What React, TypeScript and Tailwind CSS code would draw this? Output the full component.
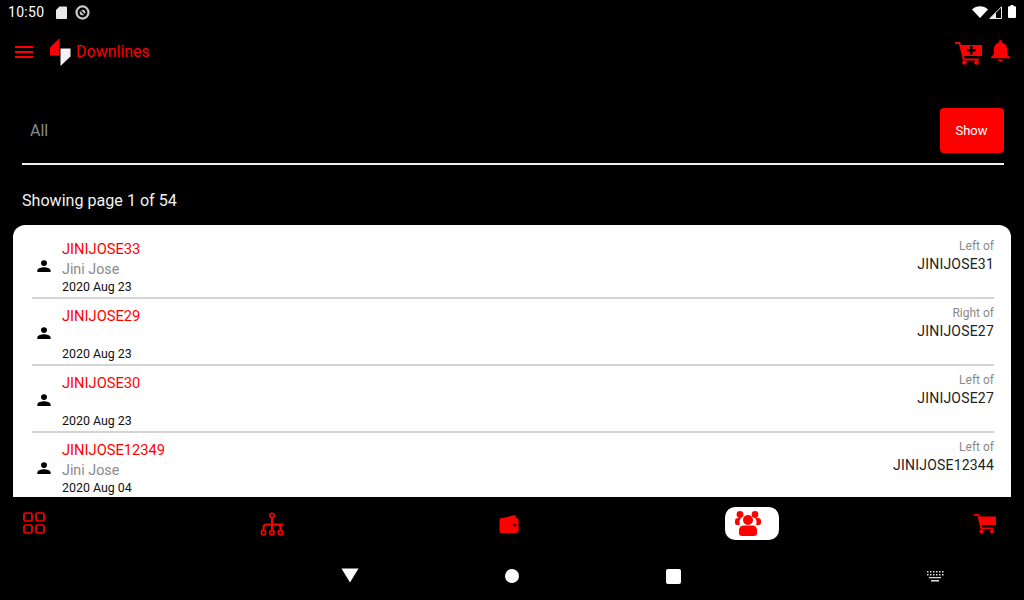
import React from "react";

function Person() {
  return (
    <svg width="16" height="16" viewBox="0 0 24 24" fill="#000" className="shrink-0">
      <path d="M12 12c2.76 0 4.5-1.9 4.500-4.500S14.760 3.500 12 3.500 7.500 4.900 7.500 7.500 9.240 12 12 12zm0 2c-3.500 0-10 1.600-10 5v2h20v-2c0-3.400-6.500-5-10-5z" />
    </svg>
  );
}

type RowT = { id: string; name: string; date: string; side: string; parent: string };
const rows: RowT[] = [
  { id: "JINIJOSE33", name: "Jini Jose", date: "2020 Aug 23", side: "Left of", parent: "JINIJOSE31" },
  { id: "JINIJOSE29", name: "", date: "2020 Aug 23", side: "Right of", parent: "JINIJOSE27" },
  { id: "JINIJOSE30", name: "", date: "2020 Aug 23", side: "Left of", parent: "JINIJOSE27" },
  { id: "JINIJOSE12349", name: "Jini Jose", date: "2020 Aug 04", side: "Left of", parent: "JINIJOSE12344" },
];

function Row({ r, last }: { r: RowT; last: boolean }) {
  return (
    <div className={`h-[67px] shrink-0 flex items-center ${last ? "" : "border-b-2 border-[#d4d4d4]"}`}>
      <div className="w-[30px] flex items-center pl-[4px] pt-[2px]">
        <Person />
      </div>
      <div className="flex-1 flex flex-col self-start pt-[8px]">
        <div className="h-[19px] leading-[19px] text-[14.7px] text-[#ff0000]">{r.id}</div>
        <div className="h-[20px] leading-[20px] text-[14.3px] text-[#8a8a8a]">{r.name}</div>
        <div className="h-[16px] leading-[16px] text-[12.4px] text-[#111]">{r.date}</div>
      </div>
      <div className="flex flex-col items-end self-start pt-[5px]">
        <div className="h-[18px] leading-[18px] text-[12px] text-[#8a8a8a]">{r.side}</div>
        <div className="h-[18px] leading-[18px] text-[14px] tracking-[0.2px] text-[#222]">{r.parent}</div>
      </div>
    </div>
  );
}

export default function App() {
  return (
    <div
      className="w-[1024px] h-[600px] bg-black overflow-hidden flex flex-col"
      style={{ fontFamily: "Roboto, sans-serif" }}
    >
      {/* status bar */}
      <div className="h-[24px] shrink-0 flex items-center px-[8px] text-white">
        <span className="text-[14px] w-[48px] tracking-[0.3px]">10:50</span>
        <svg width="11" height="13" viewBox="0 0 11 13" fill="#e8e8e8">
          <path d="M3.500 0.500H10a1 1 0 0 1 1 1V12a1 1 0 0 1-1 1H1a1 1 0 0 1-1-1V4z" />
        </svg>
        <svg width="15" height="15" viewBox="0 0 16 16" className="ml-[8px]">
          <circle cx="8" cy="8" r="6.400" fill="none" stroke="#c8c8c8" strokeWidth="2.400" />
          <circle cx="8" cy="8" r="3" fill="#c8c8c8" />
          <path d="M4.500 4.500l7 7" stroke="#000" strokeWidth="1.300" />
        </svg>
        <div className="flex-1" />
        <svg width="16" height="12" viewBox="0 0 16 12" fill="#fff">
          <path d="M0 3.500C4.500-.8 11.500-.8 16 3.500L8 12z" />
        </svg>
        <svg width="13" height="13" viewBox="0 0 13 13" className="ml-[1px]">
          <path d="M12.500 0.800V12.500H.8z" fill="none" stroke="#eee" strokeWidth="1" />
          <path d="M7 6.500V12.500H1z" fill="#eee" />
        </svg>
        <svg width="8" height="13" viewBox="0 0 8 13" fill="#fff" className="ml-[6px] mt-[-2px]">
          <path d="M2.500 0h3v1.200H7a1 1 0 0 1 1 1V12a1 1 0 0 1-1 1H1a1 1 0 0 1-1-1V2.200a1 1 0 0 1 1-1h1.500z" />
        </svg>
      </div>

      {/* toolbar */}
      <div className="h-[56px] shrink-0 flex items-center pl-[15px] pr-[14px]">
        <div className="w-[18px] flex flex-col gap-[3px] mt-[-1px]">
          <div className="h-[2px] bg-[#ff0000]" />
          <div className="h-[2px] bg-[#ff0000]" />
          <div className="h-[2px] bg-[#ff0000]" />
        </div>
        <svg width="21" height="28" viewBox="0 0 21 28" className="ml-[17px] mt-[-1px]">
          <path d="M0 9.500L9.500 0V17.500H0z" fill="#ff0000" />
          <path d="M10.500 10.500H20.500V18.500L10.500 28z" fill="#f4f4f4" />
        </svg>
        <span className="ml-[5px] text-[16px] text-[#ff0000] leading-none">Downlines</span>
        <div className="flex-1" />
        <svg width="27" height="23" viewBox="0 0 27 23" className="mt-[3px]">
          <path d="M0 0h5l1 3h21v11H9l.6 2.500H24v2H8L4 2H0z" fill="#ff0000" />
          <circle cx="9.500" cy="20.500" r="2.300" fill="#ff0000" />
          <circle cx="21.500" cy="20.500" r="2.300" fill="#ff0000" />
          <path d="M15 4h2.500v3h3v2.500h-3v3H15v-3h-3V7h3z" fill="#000" />
        </svg>
        <svg width="19" height="23" viewBox="0 0 20 24" className="ml-[9px] mt-[-2px]">
          <path d="M10 0a1.500 1.500 0 0 1 1.500 1.500v1C15 3.300 17 6.200 17 10v5l3 3v1H0v-1l3-3v-5c0-3.800 2-6.700 5.500-7.500v-1A1.500 1.500 0 0 1 10 0z" fill="#ff0000" />
          <path d="M7.500 20.500h5a2.500 2.500 0 0 1-5 0z" fill="#ff0000" />
        </svg>
      </div>

      {/* filter */}
      <div className="ml-[22px] mr-[20px] mt-[28px] h-[57px] shrink-0 border-b-2 border-[#f0f0f0] flex items-start">
        <div className="flex-1 pl-[8px] pt-[13px] text-[16px] leading-[19px] text-[#8a8a8a]">All</div>
        <div className="w-[64px] h-[45px] bg-[#ff0000] rounded-[4px] flex items-center justify-center text-white text-[13px] pr-[1px] pt-[1px]">
          Show
        </div>
      </div>

      <div className="ml-[22px] mt-[26px] h-[20px] shrink-0 leading-[20px] text-[16.1px] text-[#f2f2f2]">
        Showing page 1 of 54
      </div>

      {/* list card */}
      <div className="mx-[13px] mt-[14px] flex-1 min-h-0 bg-white rounded-t-[12px] overflow-hidden pt-[7px] pl-[19px] pr-[17px]">
        {rows.map((r, i) => (
          <Row key={r.id} r={r} last={i === rows.length - 1} />
        ))}
      </div>

      {/* bottom nav */}
      <div className="h-[55px] shrink-0 flex items-center pl-[23px]">
        <svg width="22" height="22" viewBox="0 0 22 22" fill="none" stroke="#ff0000" strokeWidth="1.700" className="mt-[-3px]">
          <rect x="1" y="1" width="8" height="8" rx="1.500" />
          <rect x="13" y="1" width="8" height="8" rx="1.500" />
          <rect x="1" y="13" width="8" height="8" rx="1.500" />
          <rect x="13" y="13" width="8" height="8" rx="1.500" />
        </svg>
        <svg width="24" height="24" viewBox="0 0 24 24" fill="none" stroke="#ff0000" strokeWidth="1.600" className="ml-[215px] mt-[-1px]">
          <circle cx="12" cy="3.500" r="2.200" />
          <circle cx="3.500" cy="20.500" r="2.200" />
          <circle cx="12" cy="20.500" r="2.200" />
          <circle cx="20.500" cy="20.500" r="2.200" />
          <path d="M12 5.500v13M3.500 18.500v-3a3 3 0 0 1 3-3h17a0 0 0 0 1 0 0M3.500 15.500a3 3 0 0 1 3-3h11a3 3 0 0 1 3 3v3" strokeWidth="2" />
        </svg>
        <svg width="20" height="20" viewBox="0 0 20 20" className="ml-[215px] mt-[-2px]">
          <path d="M2 4.500L15 1.200c1-.2 1.800.3 2 1.300l.3 1.500z" fill="#ff0000" />
          <rect x="0.500" y="4" width="19" height="15" rx="2" fill="#ff0000" />
          <circle cx="15.500" cy="11" r="1.500" fill="#200000" />
        </svg>
        <div className="ml-[206px] w-[54px] h-[33px] bg-white rounded-[10px] flex items-center pl-[10px] mt-[-2px]">
          <svg width="26" height="25" viewBox="0 0 26 25" fill="#ff0000">
            <circle cx="5" cy="3.500" r="3.400" />
            <circle cx="20" cy="3.500" r="3.400" />
            <path d="M0 10a3 3 0 0 1 3-3h3a7 7 0 0 0-1 7H2a2 2 0 0 1-2-2z" />
            <path d="M26 10a3 3 0 0 0-3-3h-3a7 7 0 0 1 1 7h3a2 2 0 0 0 2-2z" />
            <circle cx="13" cy="9" r="5" />
            <path d="M4 19a4.500 4.500 0 0 1 4.500-4.500h9A4.500 4.500 0 0 1 22 19v3a3 3 0 0 1-3 3H7a3 3 0 0 1-3-3z" />
          </svg>
        </div>
        <svg width="22" height="20" viewBox="0 0 22 20" className="ml-[195px] mt-[-2px]" fill="#ff0000">
          <path d="M0 0h4.500l1 2.500H22v8.500H7.500l.5 2.500h11.500V15H6.500L3.500 1.500H0z" />
          <circle cx="7.500" cy="17.500" r="2" />
          <circle cx="18" cy="17.500" r="2" />
        </svg>
      </div>

      {/* android nav */}
      <div className="h-[48px] shrink-0 flex items-center pl-[341px]">
        <svg width="18" height="15" viewBox="0 0 18 15" fill="#fff" className="mt-[-2px]">
          <path d="M0.500 0.500H17.500L9 14.500z" />
        </svg>
        <div className="ml-[146px] w-[14px] h-[14px] rounded-full bg-white" />
        <div className="ml-[147px] w-[15px] h-[15px] rounded-[2px] bg-white" />
        <svg width="18" height="11" viewBox="0 0 18 11" fill="#ddd" className="ml-[245px]">
          <path d="M1 0h1.500v1.500H1zM4 0h1.500v1.500H4zM7 0h1.500v1.500H7zM10 0h1.500v1.500H10zM13 0h1.500v1.500H13zM16 0h1.500v1.500H16zM1 3h1.500v1.500H1zM4 3h1.500v1.500H4zM7 3h1.500v1.500H7zM10 3h1.500v1.500H10zM13 3h1.500v1.500H13zM16 3h1.500v1.500H16zM3 6h12v1.200H3zM5 9h8v1.500H5z" />
        </svg>
      </div>
    </div>
  );
}
